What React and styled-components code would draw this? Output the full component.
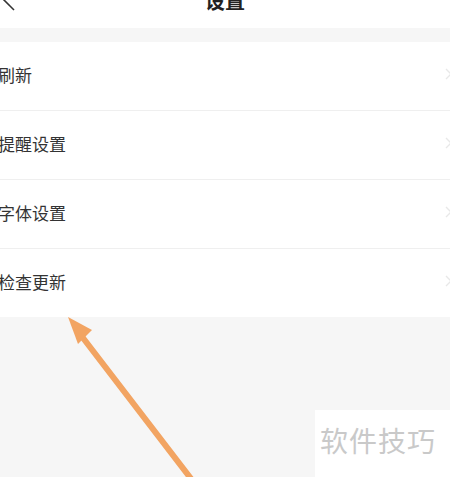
import React from 'react'
import styled, { createGlobalStyle } from 'styled-components'

const Global = createGlobalStyle`
  html, body {
    margin: 0;
    padding: 0;
    background: #f6f6f6;
    font-family: "Noto Sans CJK SC", "Noto Sans", sans-serif;
    overflow: hidden;
  }
`

const Page = styled.div`
  position: relative;
  width: 450px;
  height: 477px;
  overflow: hidden;
  background: #f6f6f6;
`

const Header = styled.div`
  height: 28px;
  background: #fff;
  display: flex;
  justify-content: center;
  align-items: flex-start;
  position: relative;
`

const Back = styled.svg`
  position: absolute;
  left: 0;
  top: 0;
`

const Title = styled.div`
  margin-top: -11px;
  font-size: 20px;
  line-height: 24px;
  font-weight: 700;
  color: #222;
`

const List = styled.div`
  margin-top: 14px;
  background: #fff;
`

const Row = styled.div`
  height: 64px;
  padding-bottom: 4px;
  display: flex;
  align-items: center;
  justify-content: space-between;
  border-top: ${p => (p.first ? 'none' : '1px solid #efefef')};
`

const Label = styled.span`
  margin-left: -2px;
  font-size: 17px;
  color: #333;
`

const Chevron = styled.svg`
  margin-right: -4px;
`

const Watermark = styled.div`
  position: absolute;
  left: 315px;
  top: 410px;
  right: 0;
  bottom: 0;
  background: #fff;
  padding: 12px 0 0 5px;
  font-size: 28px;
  line-height: 36px;
  color: #c9c9c9;
  letter-spacing: 1px;
  white-space: nowrap;
`

const Arrow = styled.svg`
  position: absolute;
  left: 0;
  top: 0;
`

const items = ['刷新', '提醒设置', '字体设置', '检查更新']

export default function App() {
  return (
    <Page>
      <Global />
      <Header>
        <Back width="20" height="14" viewBox="0 0 20 14">
          <path d="M-2 -6 L14 10" stroke="#333" strokeWidth="1.6" fill="none" />
        </Back>
        <Title>设置</Title>
      </Header>
      <List>
        {items.map((t, i) => (
          <Row key={t} first={i === 0}>
            <Label>{t}</Label>
            <Chevron width="10" height="14" viewBox="0 0 10 14">
              <path d="M2 2 L7 7 L2 12" stroke="#e8e8e8" strokeWidth="1.4" fill="none" />
            </Chevron>
          </Row>
        ))}
      </List>
      <Arrow width="450" height="477" viewBox="0 0 450 477">
        <line x1="192" y1="480" x2="80" y2="334" stroke="#f2a462" strokeWidth="6" strokeLinecap="round" />
        <polygon points="68,317 92,330 78,344" fill="#f2a462" />
      </Arrow>
      <Watermark>软件技巧</Watermark>
    </Page>
  )
}
